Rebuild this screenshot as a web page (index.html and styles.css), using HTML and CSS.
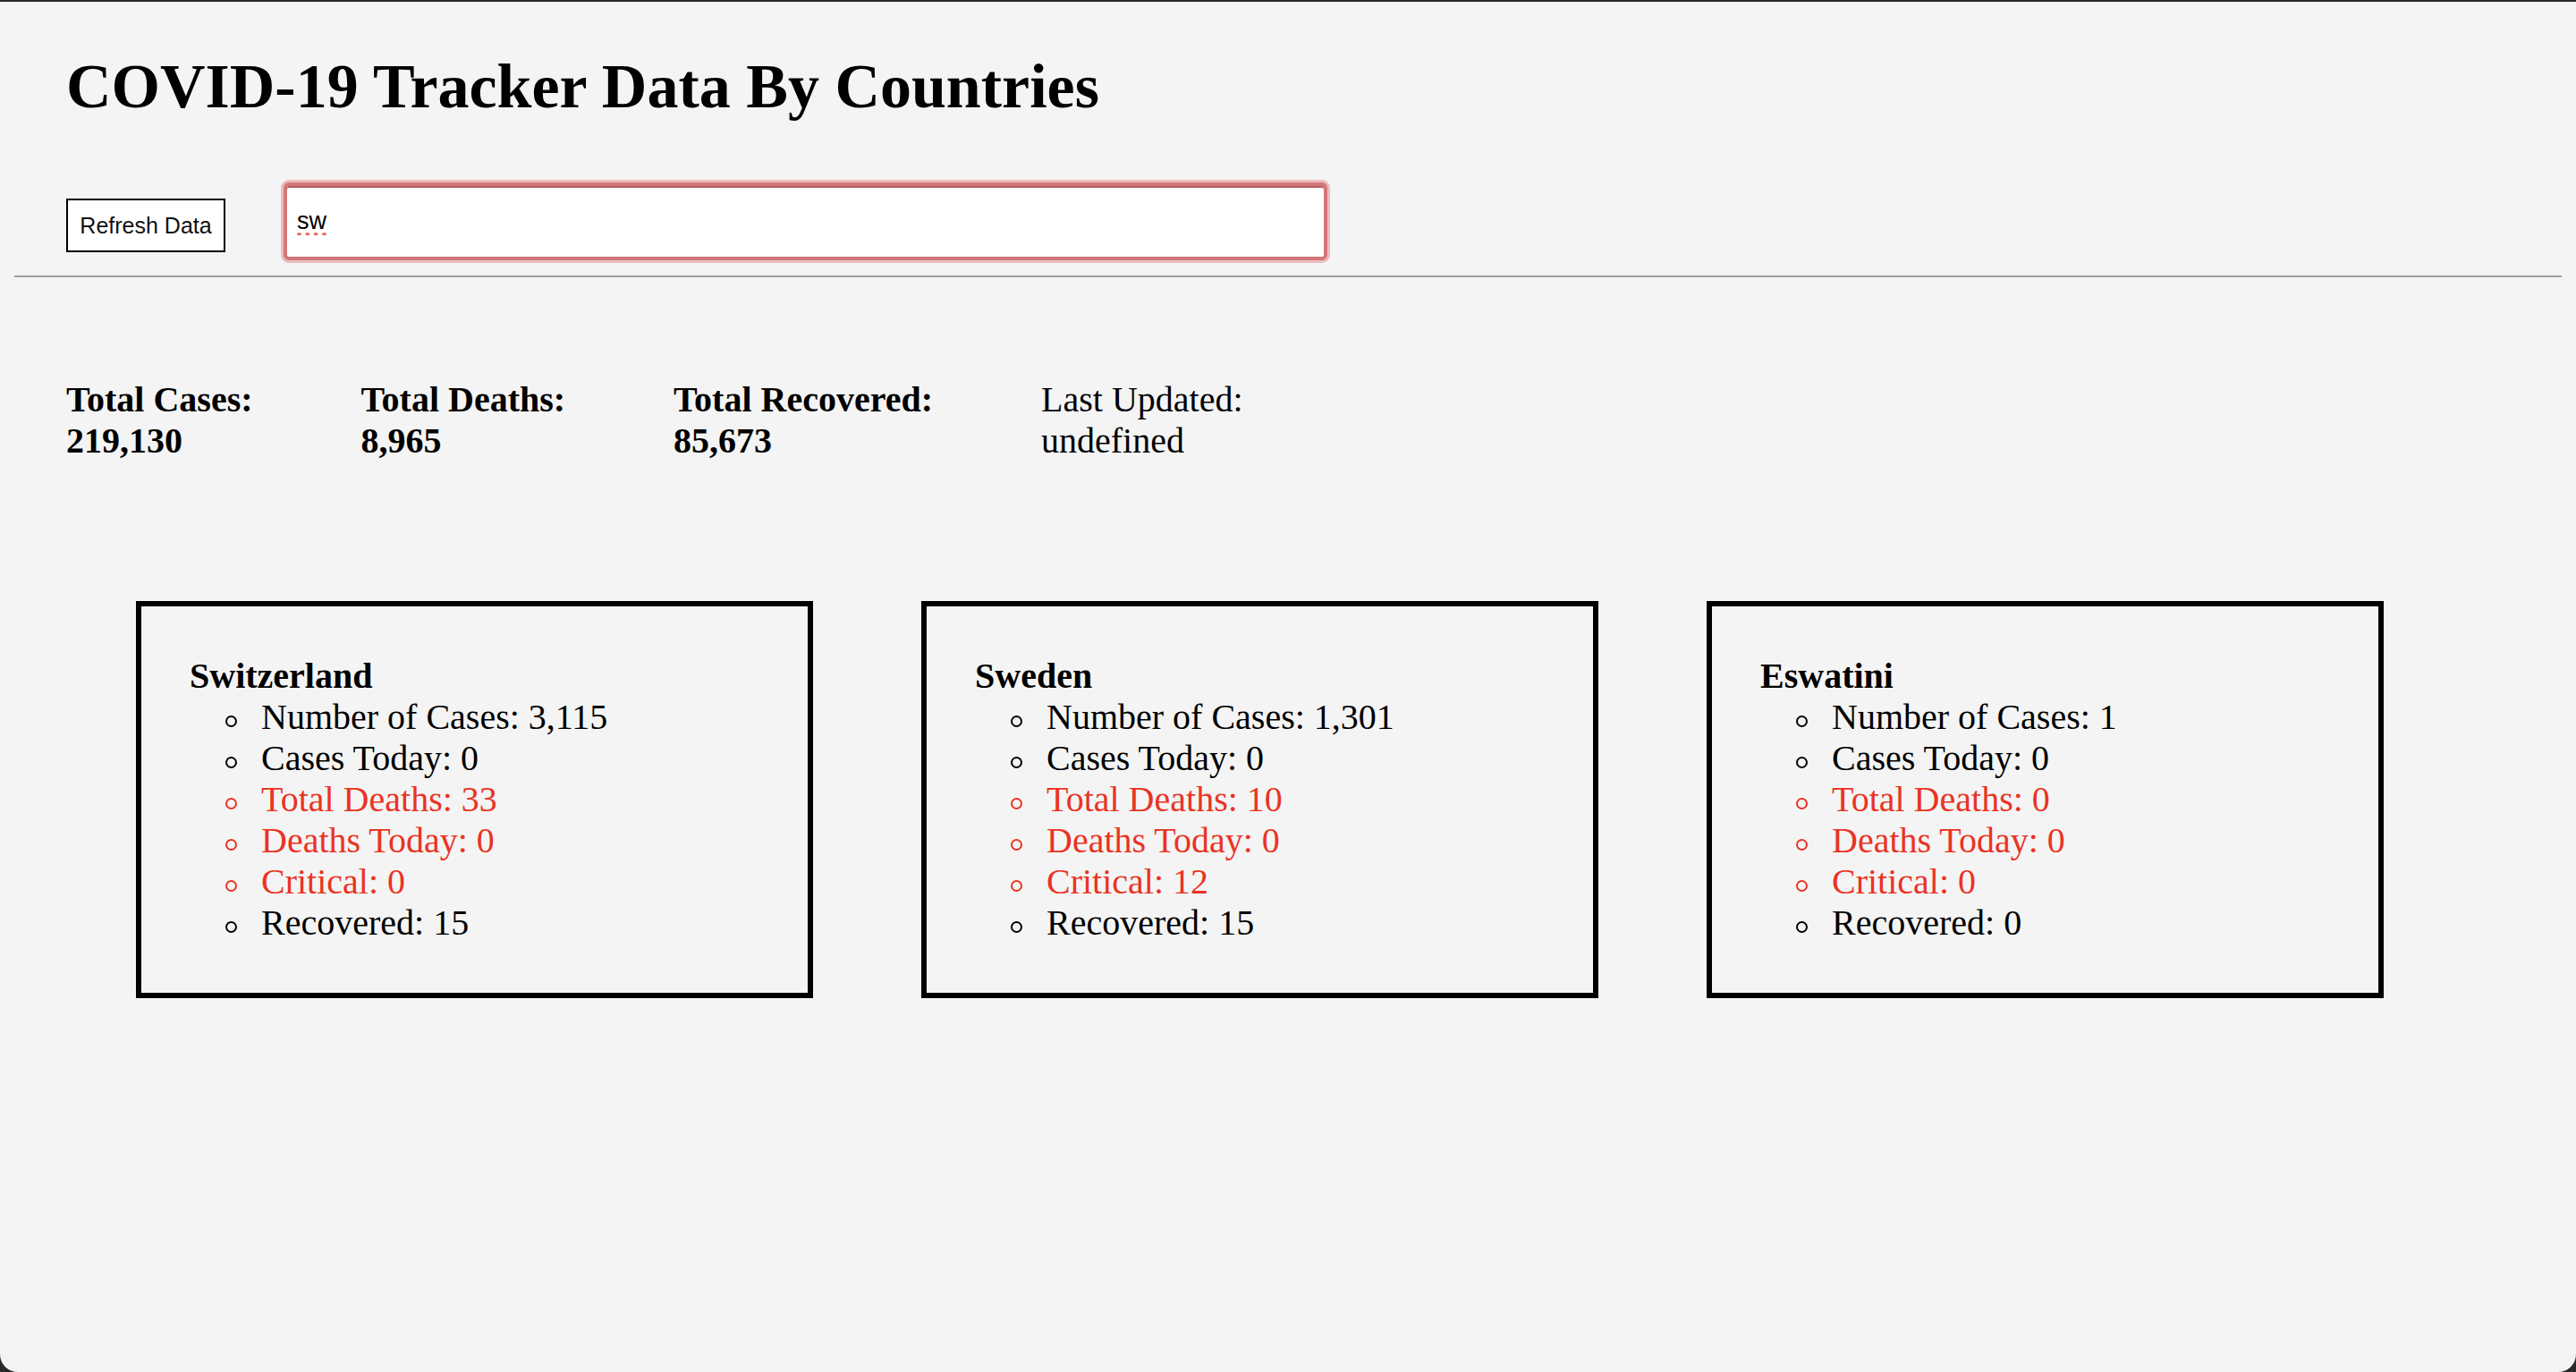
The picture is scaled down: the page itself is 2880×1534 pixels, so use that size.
FILE: index.html
```html
<!DOCTYPE html>
<html lang="en">
<head>
<meta charset="utf-8">
<title>COVID-19 Tracker</title>
<link rel="stylesheet" href="styles.css">
</head>
<body>
<div class="window">
  <header class="top">
    <h1 class="title">COVID-19 Tracker Data By Countries</h1>
    <div class="controls">
      <button class="refresh" type="button">Refresh Data</button>
      <input class="search" type="text" value="sw" spellcheck="true">
    </div>
  </header>
  <hr class="divider">
  <section class="stats">
    <div class="stat bold"><div>Total Cases:</div><div>219,130</div></div>
    <div class="stat bold"><div>Total Deaths:</div><div>8,965</div></div>
    <div class="stat bold"><div>Total Recovered:</div><div>85,673</div></div>
    <div class="stat"><div>Last Updated:</div><div>undefined</div></div>
  </section>
  <section class="cards">
    <div class="card">
      <div class="country">Switzerland</div>
      <ul class="facts">
        <li>Number of Cases: 3,115</li>
        <li>Cases Today: 0</li>
        <li class="red">Total Deaths: 33</li>
        <li class="red">Deaths Today: 0</li>
        <li class="red">Critical: 0</li>
        <li>Recovered: 15</li>
      </ul>
    </div>
    <div class="card">
      <div class="country">Sweden</div>
      <ul class="facts">
        <li>Number of Cases: 1,301</li>
        <li>Cases Today: 0</li>
        <li class="red">Total Deaths: 10</li>
        <li class="red">Deaths Today: 0</li>
        <li class="red">Critical: 12</li>
        <li>Recovered: 15</li>
      </ul>
    </div>
    <div class="card">
      <div class="country">Eswatini</div>
      <ul class="facts">
        <li>Number of Cases: 1</li>
        <li>Cases Today: 0</li>
        <li class="red">Total Deaths: 0</li>
        <li class="red">Deaths Today: 0</li>
        <li class="red">Critical: 0</li>
        <li>Recovered: 0</li>
      </ul>
    </div>
  </section>
</div>
</body>
</html>
```

FILE: styles.css
```css
html {
  background: #2a2a2a;
}
body {
  margin: 0;
  font-family: "Liberation Serif", "Times New Roman", serif;
  color: #000;
}
.window {
  min-height: 1532px;
  border-top: 2px solid #2a2a2a;
  background: #f4f4f4;
  border-radius: 0 0 20px 20px;
  padding: 0 16px;
}
.top {
  padding-left: 58px;
}
.title {
  margin: 55px 0 0;
  font-size: 70px;
  line-height: 80px;
  font-weight: bold;
}
.controls {
  display: flex;
  align-items: flex-start;
  margin-top: 67px;
}
.refresh {
  margin-top: 18px;
  width: 178px;
  height: 60px;
  padding: 0;
  border: 2px solid #000;
  border-radius: 0;
  background: #fff;
  color: #111;
  font-family: "Liberation Sans", Arial, sans-serif;
  font-size: 25px;
}
.search {
  margin-left: 65px;
  width: 1167px;
  height: 87px;
  box-sizing: border-box;
  padding: 0 0 0 11px;
  border: 4px solid #d27777;
  border-radius: 6px;
  box-shadow: 0 0 0 3px #ebbcbc, inset 0 2px 0 #b06060;
  background: #fff;
  color: #000;
  font-family: "Liberation Sans", Arial, sans-serif;
  font-size: 27px;
  text-decoration: underline dotted #e46a64;
  text-decoration-thickness: 5px;
  text-underline-offset: 4px;
  outline: none;
}
.divider {
  margin: 17px 0 0;
  border: 0;
  height: 2px;
  background: #9e9e9e;
}
.stats {
  display: flex;
  gap: 121px;
  padding-left: 58px;
  margin-top: 114px;
  font-size: 40px;
  line-height: 46px;
}
.stat.bold {
  font-weight: bold;
}
.cards {
  display: flex;
  gap: 121px;
  padding-left: 136px;
  margin-top: 156px;
}
.card {
  width: 757px;
  box-sizing: border-box;
  border: 6px solid #000;
  padding: 55px 20px 55px 54px;
  font-size: 40px;
  line-height: 46px;
}
.country {
  font-weight: bold;
}
.facts {
  margin: 0;
  padding-left: 80px;
  list-style: none;
}
.facts li {
  position: relative;
}
.facts li::before {
  content: "";
  position: absolute;
  left: -40px;
  top: 21px;
  width: 9px;
  height: 9px;
  border: 2px solid currentColor;
  border-radius: 50%;
}
.facts .red {
  color: #ea3323;
}
```
